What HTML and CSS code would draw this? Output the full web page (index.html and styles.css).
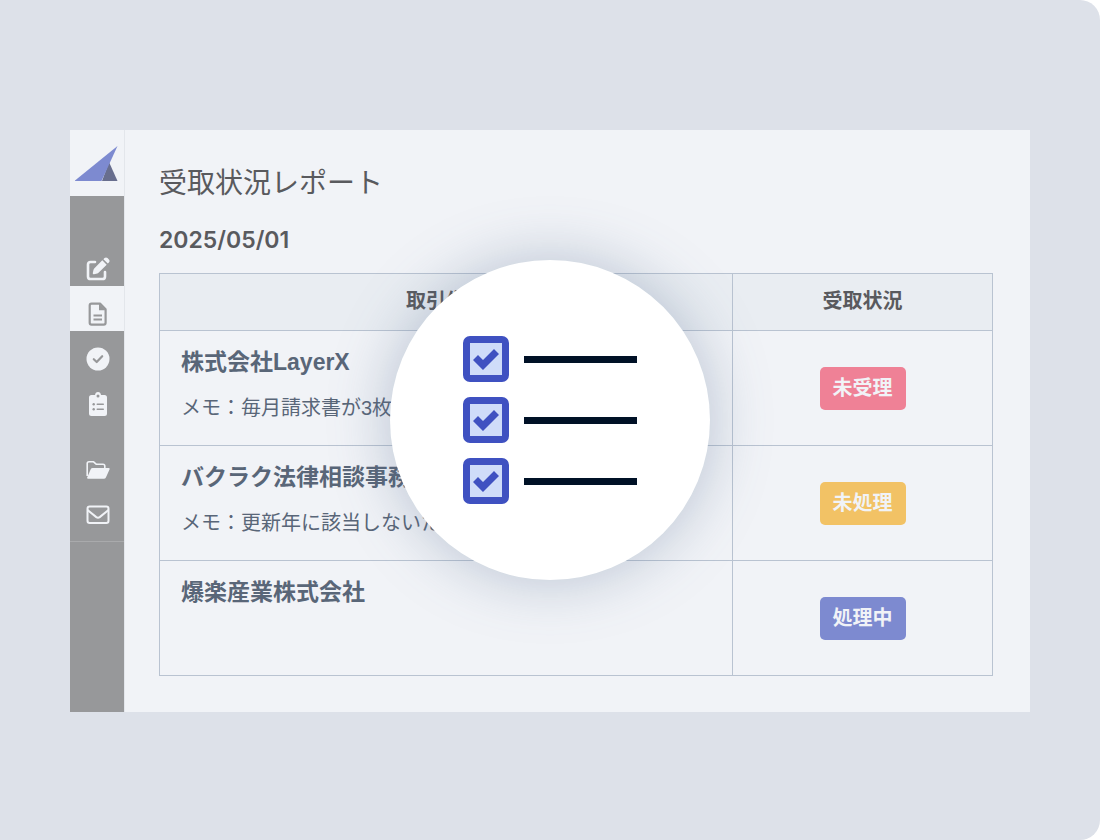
FILE: index.html
```html
<!DOCTYPE html>
<html lang="ja">
	<head>
		<meta charset="utf-8">
		<title>受取状況レポート</title>
		<link rel="stylesheet" href="styles.css">
	</head>
	<body>
		<div class="stage">
			<div class="app">
				<nav class="sidebar">
					<a href="#" class="logo" aria-label="ホーム">
						<svg width="44" height="36" viewBox="0 0 44 36">
							<path fill="#686e8e" d="M34 16 42.500 35H27z"/>
							<path fill="#7d8ad0" d="M-.5 35 42.500 0 26.500 35z"/>
						</svg>
					</a>
					<div class="menu">
						<a href="#" aria-label="作成">
							<svg width="24" height="24" viewBox="0 0 24 24">
								<path fill="none" stroke="currentColor" stroke-width="2.6" stroke-linecap="round" d="M9 5H4.6Q2 5 2 7.600V19.400Q2 22 4.600 22H16.400Q19 22 19 19.400V15"/>
								<path fill="currentColor" d="M16.300 3.300 20.700 7.700 12.500 15.800Q12 16.300 11.200 16.500L8 17.200Q6.600 17.400 6.800 16L7.500 12.800Q7.700 12 8.200 11.400zM17.400 2.200 18.500 1.100Q20 -.2 21.500 1.100L22.900 2.500Q24.200 4 22.900 5.500L21.800 6.600z"/>
							</svg>
						</a>
						<!--選択中-->
						<a href="#" class="current" aria-label="書類">
							<svg width="24" height="24" viewBox="0 0 24 24">
								<path fill="none" stroke="currentColor" stroke-width="2.200" stroke-linejoin="round" d="M5.500 1.600H14L19.600 7.200V20.800Q19.600 22.600 17.800 22.600H5.500Q3.700 22.600 3.700 20.800V3.400Q3.700 1.600 5.500 1.600z"/>
								<path fill="currentColor" d="M13 1.500V8.200H19.800zM7.500 12.500H16V14.400H7.500zM7.500 16.500H16V18.400H7.500z"/>
							</svg>
						</a>
						<a href="#" aria-label="承認">
							<svg width="24" height="24" viewBox="0 0 24 24">
								<circle cx="12" cy="12" r="11.500" fill="currentColor"/>
								<path fill="none" stroke="#97989a" stroke-width="2.200" stroke-linecap="round" stroke-linejoin="round" d="M7.800 12.200 10.700 15 16.200 9.200"/>
							</svg>
						</a>
						<a href="#" aria-label="一覧">
							<svg width="24" height="24" viewBox="0 0 24 24">
								<path fill="currentColor" d="M5.500 3H9Q9.400 0 12 0T15 3H18.500Q21 3 21 5.500V21.500Q21 24 18.500 24H5.500Q3 24 3 21.500V5.500Q3 3 5.500 3z"/>
								<g fill="#97989a">
									<circle cx="12" cy="4" r="1.500"/>
									<circle cx="7.700" cy="12.200" r="1.200"/>
									<circle cx="7.700" cy="17.200" r="1.200"/>
									<rect x="10.500" y="11.500" width="7.500" height="1.500" rx=".7"/>
									<rect x="10.500" y="16.500" width="7.500" height="1.500" rx=".7"/>
								</g>
							</svg>
						</a>
						<a href="#" class="group" aria-label="フォルダ">
							<svg width="24" height="24" viewBox="0 0 24 24">
								<path fill="none" stroke="currentColor" stroke-width="1.600" stroke-linejoin="round" d="M1.200 18V5.600Q1.200 3.800 3 3.800H7.600L10.400 6.300H17Q18.800 6.300 18.800 8.100V10"/>
								<path fill="currentColor" d="M6.600 10H22.600Q24.200 10 23.500 11.500L19.900 19.400Q19.300 20.800 17.800 20.800H2.200Q.6 20.800 1.200 19.400L4.700 11.300Q5.300 10 6.600 10z"/>
							</svg>
						</a>
						<a href="#" aria-label="メール">
							<svg width="24" height="24" viewBox="0 0 24 24">
								<rect x="1.500" y="3.500" width="21" height="16.500" rx="2.200" fill="none" stroke="currentColor" stroke-width="2"/>
								<path fill="none" stroke="currentColor" stroke-width="2" d="M1.500 7 10.300 14.100Q12 15.300 13.700 14.100L22.500 7"/>
							</svg>
						</a>
					</div>
				</nav>
				<main class="report">
					<h1>受取状況レポート</h1>
					<p class="date">2025/05/01</p>
					<table>
						<thead>
							<tr>
								<th>取引先名</th>
								<th class="status">受取状況</th>
							</tr>
						</thead>
						<tbody>
							<tr>
								<td>
									<p class="name">株式会社LayerX</p>
									<p class="memo">メモ：毎月請求書が3枚</p>
								</td>
								<td class="status"><span class="badge red">未受理</span></td>
							</tr>
							<tr>
								<td>
									<p class="name">バクラク法律相談事務所</p>
									<p class="memo">メモ：更新年に該当しないため</p>
								</td>
								<td class="status"><span class="badge yellow">未処理</span></td>
							</tr>
							<tr>
								<td>
									<p class="name">爆楽産業株式会社</p>
								</td>
								<td class="status"><span class="badge blue">処理中</span></td>
							</tr>
						</tbody>
					</table>
				</main>
			</div>
			<!--チェックリスト-->
			<div class="circle">
				<label class="check"><input type="checkbox" aria-label="項目1" checked><span class="line"></span></label>
				<label class="check"><input type="checkbox" aria-label="項目2" checked><span class="line"></span></label>
				<label class="check"><input type="checkbox" aria-label="項目3" checked><span class="line"></span></label>
			</div>
		</div>
	</body>
</html>
```

FILE: styles.css
```css
* {
	margin: 0;
	padding: 0;
	box-sizing: border-box;
}

body {
	background-color: #FFFFFF;
	font-family: "Liberation Sans", "Noto Sans CJK JP", sans-serif;
	color: #595a5e;
}

.stage {
	position: relative;
	min-height: 100vh;
	padding: 130px 70px 128px;
	background-color: #dde1e9;
	border-radius: 0 20px 20px 0;
	display: flex;
}

.app {
	flex: 1;
	display: flex;
	background-color: #f1f3f7;
}

.sidebar {
	flex: none;
	width: 55px;
	border-right: 1px solid #e3e6eb;
	background-color: #97989a;
}

.logo {
	display: flex;
	height: 66px;
	padding: 16px 0 0 5px;
	background-color: #f1f3f7;
}

.menu {
	padding: 45px 0 9px;
	border-bottom: 1px solid #a9aaac;
}

.menu a {
	display: flex;
	height: 45px;
	padding: 10px 0 0 2px;
	align-items: center;
	justify-content: center;
	color: #f1f3f7;
}

.menu a.current {
	background-color: #f1f3f7;
	color: #97989a;
}

.menu a.group {
	margin-top: 21px;
}

.report {
	flex: 1;
	padding: 34px 37px 36px 34px;
}

h1 {
	font-size: 28px;
	font-weight: 400;
	line-height: 40px;
}

.date {
	margin: 21px 0 18px;
	font-family: Inter, sans-serif;
	font-size: 23px;
	font-weight: 600;
	line-height: 30px;
}

table {
	width: 100%;
	border-collapse: collapse;
}

th,
td {
	border: 1px solid #b9c3d1;
}

th {
	height: 57px;
	padding-bottom: 5px;
	background-color: #e9edf2;
	font-size: 20px;
	font-weight: bold;
}

td {
	height: 115px;
	padding: 15px 21px 0;
	vertical-align: top;
	color: #596678;
}

.status {
	width: 260px;
}

td.status {
	padding: 0;
	text-align: center;
	vertical-align: middle;
}

.name {
	font-size: 23px;
	font-weight: bold;
	line-height: 32px;
}

.memo {
	margin-top: 15px;
	font-size: 20px;
	font-weight: 400;
	line-height: 30px;
}

.badge {
	display: inline-block;
	padding: 0 13px;
	border-radius: 5px;
	font-size: 20px;
	font-weight: bold;
	line-height: 43px;
	color: #f1f3f7;
	vertical-align: middle;
}

.red {
	background-color: #ef8196;
}

.yellow {
	background-color: #f2c265;
}

.blue {
	background-color: #7d8ad0;
}

.circle {
	position: absolute;
	top: 50%;
	left: 50%;
	width: 320px;
	height: 320px;
	transform: translate(-50%, -50%);
	border-radius: 50%;
	background-color: #FFFFFF;
	box-shadow: 0 0 60px rgba(80, 105, 140, 0.36);
	display: flex;
	flex-direction: column;
	align-items: center;
	justify-content: center;
	gap: 15px;
}

.check {
	display: flex;
	align-items: center;
	gap: 15px;
}

.check input {
	appearance: none;
	width: 46px;
	height: 46px;
	border: 7px solid #3f51c1;
	border-radius: 7px;
	background-color: #cfdcf9;
}

.check input:checked::before {
	content: "";
	display: block;
	width: 32px;
	height: 32px;
	background-color: #3f51c1;
	clip-path: polygon(3px 17px, 8px 12px, 13px 17px, 24px 6px, 29px 11px, 13px 27px);
}

.line {
	width: 113px;
	height: 7px;
	background-color: #001126;
}
```
